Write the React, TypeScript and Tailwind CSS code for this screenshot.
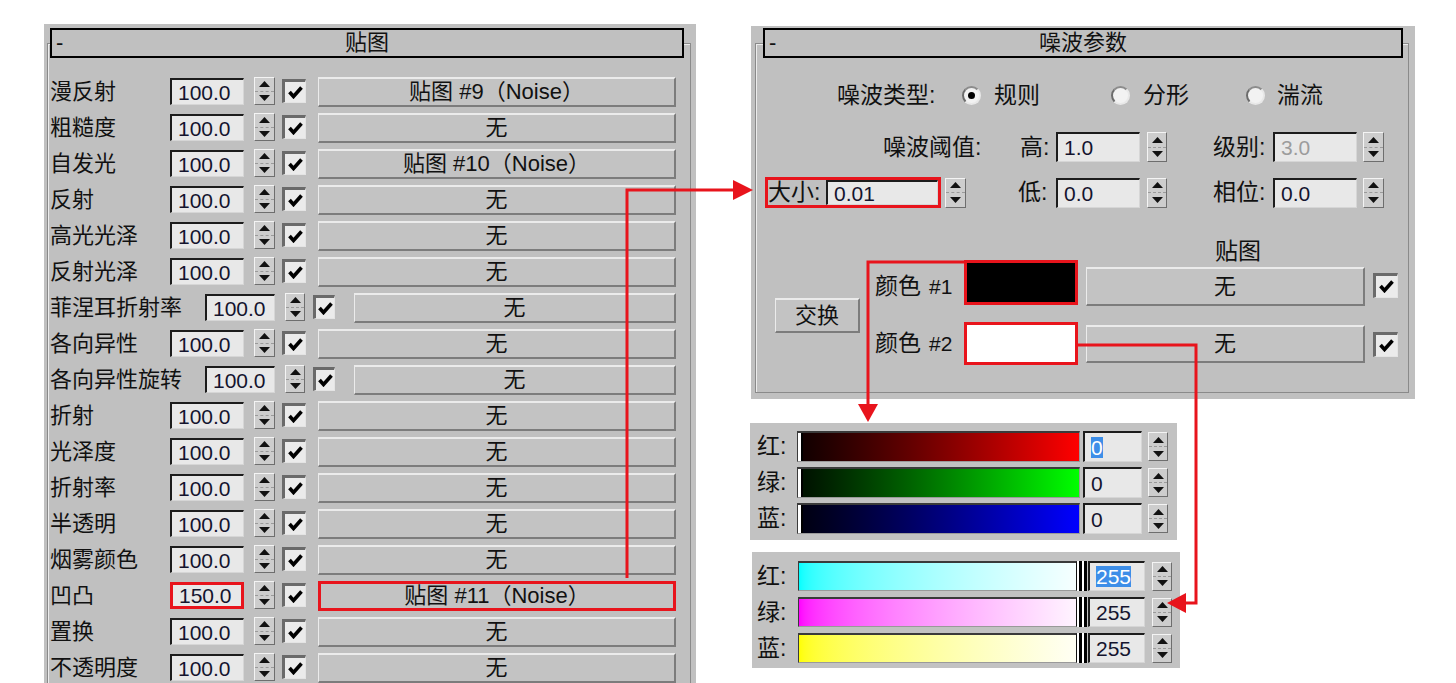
import React from 'react';

type MapRowData = {
  label: string;
  map?: string;
  value?: string;
  long?: boolean;
  red?: boolean;
};

const ROWS: MapRowData[] = [
  { label: '漫反射', map: '贴图 #9（Noise）' },
  { label: '粗糙度' },
  { label: '自发光', map: '贴图 #10（Noise）' },
  { label: '反射' },
  { label: '高光光泽' },
  { label: '反射光泽' },
  { label: '菲涅耳折射率', long: true },
  { label: '各向异性' },
  { label: '各向异性旋转', long: true },
  { label: '折射' },
  { label: '光泽度' },
  { label: '折射率' },
  { label: '半透明' },
  { label: '烟雾颜色' },
  { label: '凹凸', value: '150.0', map: '贴图 #11（Noise）', red: true },
  { label: '置换' },
  { label: '不透明度' },
];

function Spinner({ className = '' }: { className?: string }) {
  return (
    <div
      className={`flex shrink-0 flex-col border border-t-[#f4f4f4] border-l-[#f4f4f4] border-r-[#6e6e6e] border-b-[#6e6e6e] bg-[#cdcdcd] ${className}`}
    >
      <div className="flex flex-1 items-center justify-center border-b border-dashed border-[#9a9a9a]">
        <svg width="11" height="6" viewBox="0 0 11 6">
          <path d="M5.5 0L11 6H0Z" fill="#111" />
        </svg>
      </div>
      <div className="flex flex-1 items-center justify-center">
        <svg width="11" height="6" viewBox="0 0 11 6">
          <path d="M0 0H11L5.5 6Z" fill="#111" />
        </svg>
      </div>
    </div>
  );
}

function Check({ className = '' }: { className?: string }) {
  return (
    <div
      className={`flex shrink-0 items-center justify-center border-t-[3px] border-l-[3px] border-r border-b border-t-[#6a6a6a] border-l-[#6a6a6a] border-r-[#e4e4e4] border-b-[#e4e4e4] bg-[#ebebeb] ${className}`}
    >
      <svg width="15" height="13" viewBox="0 0 15 13">
        <path d="M1.5 6L5.5 10.5L13.5 1.5" fill="none" stroke="#000" strokeWidth="3.6" />
      </svg>
    </div>
  );
}

function Field({
  value,
  className = '',
  red = false,
  dim = false,
  selected = false,
}: {
  value: string;
  className?: string;
  red?: boolean;
  dim?: boolean;
  selected?: boolean;
}) {
  const frame = red
    ? 'border-[3px] border-[#e8141c]'
    : 'border-t-2 border-l-2 border-r border-b border-t-[#1c1c1c] border-l-[#1c1c1c] border-r-[#d6d6d6] border-b-[#d6d6d6]';
  return (
    <div
      className={`flex shrink-0 items-center bg-[#e8e8e8] pl-[6px] text-[21px] leading-none ${dim ? 'text-[#9c9c9c]' : 'text-[#14142e]'} ${frame} ${className}`}
    >
      {selected ? <span className="bg-[#3d8ee8] text-white">{value}</span> : value}
    </div>
  );
}

function MapButton({ label, className = '', red = false }: { label: string; className?: string; red?: boolean }) {
  const frame = red
    ? 'border-[3px] border-[#e8141c]'
    : 'border-t-2 border-l border-b-2 border-r-2 border-t-[#ebebeb] border-l-[#ebebeb] border-b-[#7c7c7c] border-r-[#7c7c7c]';
  return (
    <div
      className={`flex shrink-0 items-center justify-center bg-[#c3c3c3] text-[22px] leading-none text-[#111] ${frame} ${className}`}
    >
      {label}
    </div>
  );
}

function TitleBar({ title, className = '' }: { title: string; className?: string }) {
  return (
    <div className={`flex h-[30px] items-center border-2 border-black bg-[#c0c0c0] text-[22px] leading-none ${className}`}>
      <span className="w-[30px] pl-[4px]">-</span>
      <span className="flex-1 text-center">{title}</span>
      <span className="w-[30px]" />
    </div>
  );
}

function Radio({ checked = false, className = '' }: { checked?: boolean; className?: string }) {
  return (
    <div
      className={`flex h-[19px] w-[19px] shrink-0 items-center justify-center rounded-full border-2 border-t-[#8c8c8c] border-l-[#6c6c6c] border-r-[#e8e8e8] border-b-[#e8e8e8] bg-[#f2f2f2] ${className}`}
    >
      {checked && <div className="h-[7px] w-[7px] rounded-full bg-black" />}
    </div>
  );
}

function MapRow({ row }: { row: MapRowData }) {
  const long = !!row.long;
  return (
    <div className="flex h-[30px] items-start">
      <div className={`flex h-[30px] shrink-0 items-center text-[22px] leading-none ${long ? 'w-[155px]' : 'w-[120px]'}`}>
        {row.label}
      </div>
      <Field
        value={row.value ?? '100.0'}
        red={row.red}
        className={long ? 'mt-[1px] h-[27px] w-[70px]' : 'mt-[1px] h-[27px] w-[74px]'}
      />
      <Spinner className={long ? 'ml-[10px] h-[28px] w-[20px]' : 'ml-[10px] h-[28px] w-[21px]'} />
      <Check className={long ? 'ml-[8px] mt-[2px] h-[24px] w-[22px]' : 'ml-[7px] mt-[2px] h-[24px] w-[24px]'} />
      <MapButton
        label={row.map ?? '无'}
        red={row.red}
        className={long ? 'ml-[19px] h-[30px] w-[322px]' : 'ml-[12px] h-[30px] w-[358px]'}
      />
    </div>
  );
}

function MapsPanel() {
  return (
    <div className="ml-[44px] mt-[24px] flex h-[659px] w-[652px] shrink-0 flex-col overflow-hidden bg-[#c0c0c0]">
      <div className="ml-[3px] mr-[5px] mt-[19px] flex flex-1 flex-col border-l border-t border-r border-[#8a8a8a] shadow-[inset_1px_1px_0_#ececec]">
        <TitleBar title="贴图" className="-mt-[16px] ml-[2px] mr-[6px]" />
        <div className="mt-[19px] flex flex-col gap-[6px] pl-[2px]">
          {ROWS.map((row) => (
            <MapRow key={row.label} row={row} />
          ))}
        </div>
      </div>
    </div>
  );
}

function NoisePanel() {
  return (
    <div className="flex h-[373px] w-[664px] flex-col bg-[#c0c0c0] text-[23px] leading-none">
      <div className="mb-[6px] ml-[4px] mr-[6px] mt-[17px] flex flex-1 flex-col border border-[#8a8a8a] shadow-[inset_1px_1px_0_#ececec]">
        <TitleBar title="噪波参数" className="-mt-[16px] ml-[7px] mr-[5px]" />

        {/* noise type */}
        <div className="mt-[22px] flex h-[30px] items-center">
          <div className="ml-[81px] w-[125px] shrink-0">噪波类型:</div>
          <Radio checked />
          <div className="ml-[13px] w-[117px] shrink-0">规则</div>
          <Radio />
          <div className="ml-[13px] w-[103px] shrink-0">分形</div>
          <Radio />
          <div className="ml-[12px] shrink-0">湍流</div>
        </div>

        {/* threshold high / levels */}
        <div className="mt-[22px] flex h-[30px] items-center">
          <div className="ml-[127px] w-[137px] shrink-0">噪波阈值:</div>
          <div className="w-[36px] shrink-0">高:</div>
          <Field value="1.0" className="h-[30px] w-[84px]" />
          <Spinner className="ml-[7px] h-[30px] w-[20px]" />
          <div className="ml-[46px] w-[60px] shrink-0">级别:</div>
          <Field value="3.0" dim className="h-[30px] w-[84px]" />
          <Spinner className="ml-[6px] h-[30px] w-[21px]" />
        </div>

        {/* size / low / phase */}
        <div className="mt-[15px] flex h-[31px] items-center">
          <div className="ml-[9px] flex h-[31px] w-[176px] shrink-0 items-center border-[3px] border-[#e8141c]">
            <span className="w-[58px] shrink-0">大小:</span>
            <Field value="0.01" className="h-[25px] w-[112px]" />
          </div>
          <Spinner className="ml-[4px] h-[30px] w-[21px]" />
          <div className="ml-[52px] w-[38px] shrink-0">低:</div>
          <Field value="0.0" className="h-[30px] w-[84px]" />
          <Spinner className="ml-[7px] h-[30px] w-[20px]" />
          <div className="ml-[46px] w-[60px] shrink-0">相位:</div>
          <Field value="0.0" className="h-[30px] w-[84px]" />
          <Spinner className="ml-[6px] h-[30px] w-[21px]" />
        </div>

        <div className="ml-[459px] mt-[34px] h-[18px] leading-[18px]">贴图</div>

        {/* colours */}
        <div className="flex">
          <MapButton label="交换" className="ml-[19px] mt-[38px] h-[35px] w-[85px]" />
          <div className="ml-[15px] flex flex-col">
            <div className="flex h-[45px]">
              <div className="flex w-[89px] shrink-0 items-center pt-[8px]">
                颜色 <span className="ml-[8px] text-[21px]">#1</span>
              </div>
              <div className="h-[45px] w-[114px] shrink-0 border-[3px] border-[#e8141c] bg-black" />
              <MapButton label="无" className="ml-[8px] mt-[7px] h-[39px] w-[279px]" />
              <Check className="ml-[8px] mt-[13px] h-[25px] w-[25px]" />
            </div>
            <div className="mt-[17px] flex h-[43px]">
              <div className="flex w-[89px] shrink-0 items-center">
                颜色 <span className="ml-[8px] text-[21px]">#2</span>
              </div>
              <div className="h-[43px] w-[114px] shrink-0 border-[3px] border-[#e8141c] bg-white" />
              <MapButton label="无" className="ml-[8px] mt-[3px] h-[38px] w-[279px]" />
              <Check className="ml-[8px] mt-[10px] h-[25px] w-[25px]" />
            </div>
          </div>
        </div>
      </div>
    </div>
  );
}

const BLACK_ROWS = [
  { label: '红:', bar: 'bg-linear-to-r from-[#120000] to-[#ff0000]', selected: true },
  { label: '绿:', bar: 'bg-linear-to-r from-[#001200] to-[#00ff00]', selected: false },
  { label: '蓝:', bar: 'bg-linear-to-r from-[#000012] to-[#0000ff]', selected: false },
];

const WHITE_ROWS = [
  { label: '红:', bar: 'bg-linear-to-r from-[#00ffff] to-[#f6ffff]', selected: true },
  { label: '绿:', bar: 'bg-linear-to-r from-[#ff00ff] to-[#fff4ff]', selected: false },
  { label: '蓝:', bar: 'bg-linear-to-r from-[#ffff00] to-[#fffff4]', selected: false },
];

function BlackPicker() {
  return (
    <div className="-ml-[1px] mt-[24px] flex h-[117px] w-[427px] flex-col gap-[5px] bg-[#c2c2c2] pl-[7px] pt-[8px] text-[23px] leading-none">
      {BLACK_ROWS.map((r) => (
        <div key={r.label} className="flex h-[31px] items-center">
          <div className="w-[40px] shrink-0">{r.label}</div>
          <div className="flex h-[31px] w-[283px] shrink-0 border border-t-2 border-t-[#3a3a3a] border-l-[#3a3a3a] border-r-[#9a9a9a] border-b-[#9a9a9a]">
            <div className="w-[5px] border-r-2 border-black bg-white" />
            <div className={`flex-1 ${r.bar}`} />
          </div>
          <Field value="0" selected={r.selected} className="ml-[3px] h-[31px] w-[59px]" />
          <Spinner className="ml-[6px] h-[29px] w-[20px]" />
        </div>
      ))}
    </div>
  );
}

function WhitePicker() {
  return (
    <div className="ml-[1px] mt-[12px] flex h-[116px] w-[428px] flex-col gap-[6px] bg-[#c2c2c2] pl-[5px] pt-[9px] text-[23px] leading-none">
      {WHITE_ROWS.map((r) => (
        <div key={r.label} className="flex h-[30px] items-center">
          <div className="w-[41px] shrink-0">{r.label}</div>
          <div className={`h-[30px] w-[279px] shrink-0 border border-t-2 border-t-[#3a3a3a] border-l-[#3a3a3a] border-b-[#9a9a9a] ${r.bar}`} />
          <div className="flex h-[30px] w-[10px] shrink-0">
            <div className="w-[2px] bg-white" />
            <div className="w-[3px] bg-black" />
            <div className="w-[2px] bg-white" />
            <div className="w-[3px] bg-black" />
          </div>
          <Field value="255" selected={r.selected} className="ml-[1px] h-[30px] w-[57px]" />
          <Spinner className="ml-[7px] h-[29px] w-[20px]" />
        </div>
      ))}
    </div>
  );
}

function Arrows() {
  const red = '#e8141c';
  return (
    <svg className="pointer-events-none absolute left-0 top-0" width="1456" height="683" viewBox="0 0 1456 683">
      <polyline points="627,578 627,190 736,190" fill="none" stroke={red} strokeWidth="3" />
      <polygon points="733,180 753,190 733,200" fill={red} />
      <polyline points="964,262 868,262 868,406" fill="none" stroke={red} strokeWidth="3" />
      <polygon points="858,404 878,404 868,422" fill={red} />
      <polyline points="1078,345 1196,345 1196,603 1184,603" fill="none" stroke={red} strokeWidth="3" />
      <polygon points="1186,593 1186,613 1167,603" fill={red} />
    </svg>
  );
}

export default function App() {
  return (
    <div className="relative flex h-[683px] w-[1456px] overflow-hidden bg-white font-['Liberation_Sans','Noto_Sans_CJK_SC',sans-serif] text-[#111]">
      <MapsPanel />
      <div className="ml-[55px] mt-[26px] flex shrink-0 flex-col">
        <NoisePanel />
        <BlackPicker />
        <WhitePicker />
      </div>
      <Arrows />
    </div>
  );
}
